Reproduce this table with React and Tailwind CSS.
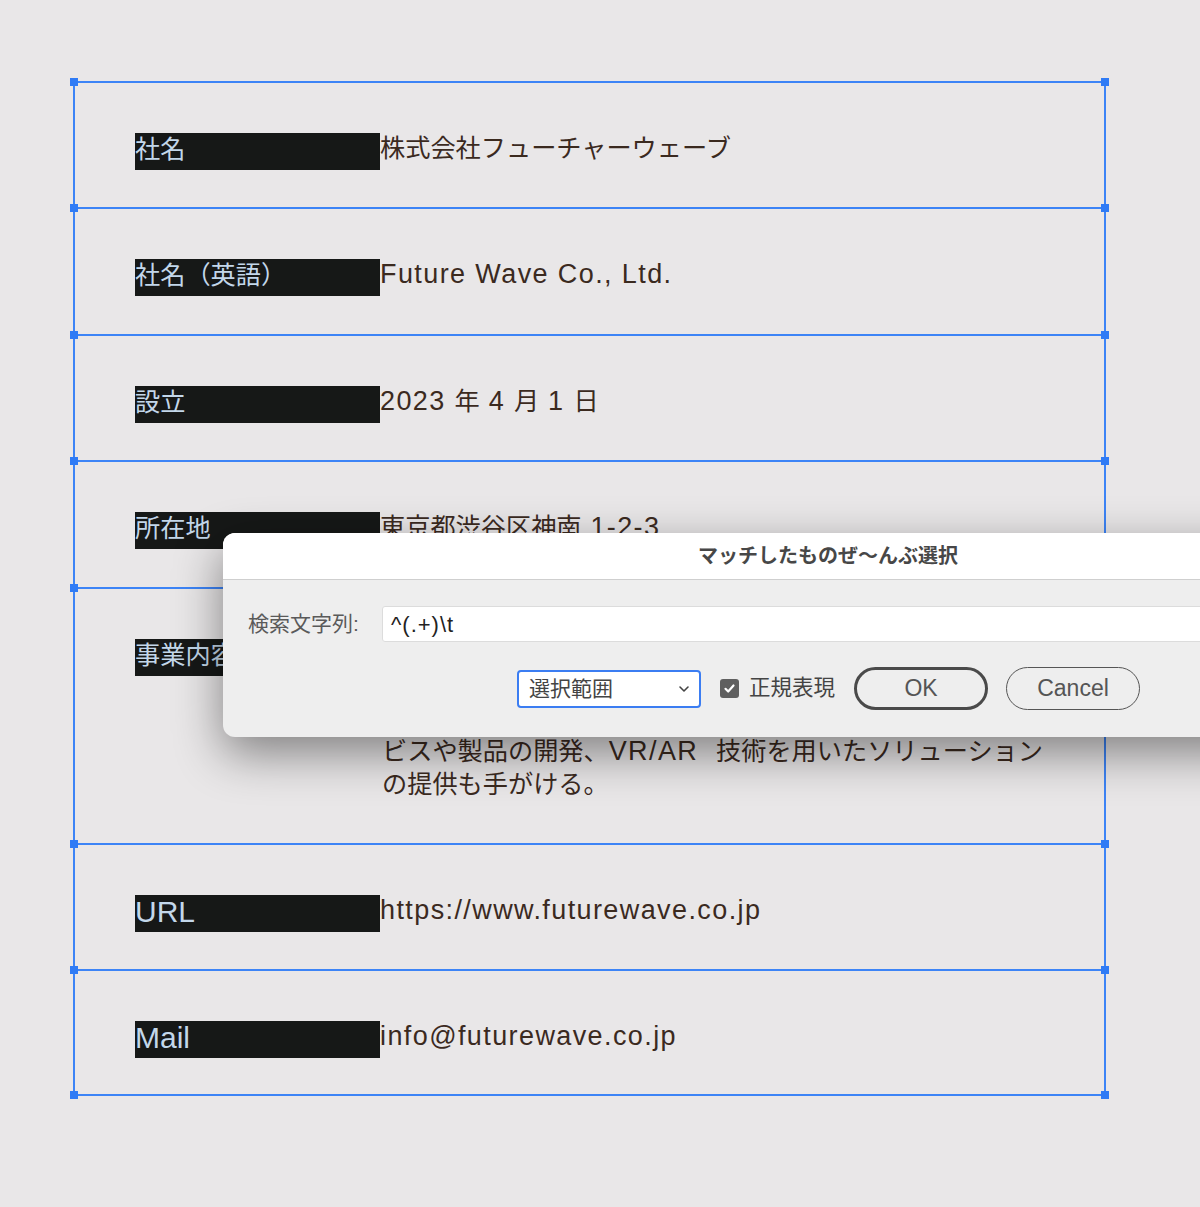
import React from 'react'

const FONT = { fontFamily: '"Liberation Sans", "Noto Sans CJK JP", sans-serif' }

// ASCII runs get their own (wider) setting, CJK keeps the base size
function Mixed({ text, latin }) {
  const parts = text.split(/([\x20-\x7e]+)/).filter(Boolean)
  return parts.map((p, i) =>
    /^[\x20-\x7e]+$/.test(p) ? <span key={i} className={latin}>{p}</span> : <span key={i}>{p}</span>
  )
}

const ROWS = [
  { label: '社名', value: '株式会社フューチャーウェーブ', h: 'h-[126px]' },
  { label: '社名（英語）', value: 'Future Wave Co., Ltd.', h: 'h-[127px]' },
  { label: '設立', value: '2023 年 4 月 1 日', h: 'h-[126px]' },
  { label: '所在地', value: '東京都渋谷区神南 1-2-3', h: 'h-[127px]' },
  {
    label: '事業内容',
    value: [
      'Web サイトやスマートフォンアプリの企画・制作を',
      '中心に、デジタルマーケティング支援、クラウド',
      'サービスの構築・運用、オリジナルの Web サー',
      'ビスや製品の開発、VR/AR  技術を用いたソリューション',
      'の提供も手がける。',
    ],
    h: 'h-[256px]',
  },
  { label: 'URL', value: 'https://www.futurewave.co.jp', h: 'h-[126px]' },
  { label: 'Mail', value: 'info@futurewave.co.jp', h: 'h-[127px]', last: true },
]

const VALUE_LATIN = 'text-[27px] tracking-[1.4px]'
const LABEL_LATIN = 'text-[30px]'

function Handle({ side, bottom }) {
  return (
    <span
      className={`absolute w-[8px] h-[8px] bg-[#2f7bf5] ${side === 'l' ? '-left-[5px]' : '-right-[5px]'} ${bottom ? '-bottom-[5px]' : '-top-[5px]'}`}
    />
  )
}

function Row({ row }) {
  const multi = Array.isArray(row.value)
  return (
    <div className={`relative ${row.h} border-t-2 border-[#3d84f6] ${row.last ? 'border-b-2' : ''}`}>
      <Handle side="l" />
      <Handle side="r" />
      {row.last && <Handle side="l" bottom />}
      {row.last && <Handle side="r" bottom />}
      <div className="flex items-start pl-[60px] pt-[49px]">
        <div className="mt-[1px] w-[245px] h-[37px] bg-[#161817] text-[#c3d7ea] text-[25.2px] leading-[33px] whitespace-nowrap overflow-hidden">
          <Mixed text={row.label} latin={LABEL_LATIN} />
        </div>
        <div className={`text-[#3b2a1f] text-[25.2px] leading-[33px] whitespace-pre ${multi ? '-mt-[2px]' : ''}`}>
          {multi
            ? row.value.map((l, i) => (
                <div key={i} className="pl-[2px]"><Mixed text={l} latin={VALUE_LATIN} /></div>
              ))
            : <Mixed text={row.value} latin={VALUE_LATIN} />}
        </div>
      </div>
    </div>
  )
}

function Dialog() {
  return (
    <div className="absolute left-[223px] top-[533px] w-[1210px] h-[204px] rounded-[12px] bg-[#eeeeee] overflow-hidden shadow-[0_16px_48px_rgba(0,0,0,0.45)]">
      <div className="h-[47px] bg-white border-b border-[#cfcfcf] flex items-center justify-center">
        <span className="text-[20px] font-bold text-[#474747]">マッチしたものぜ〜んぶ選択</span>
      </div>
      <div className="pl-[25px] pt-[26px]">
        <div className="flex items-center">
          <span className="w-[134px] text-[21px] text-[#5a5a5a]">検索文字列:</span>
          <div className="flex-1 h-[36px] bg-white border border-[#dcdcdc] rounded-[3px] flex items-center pl-[8px] text-[22px] tracking-[1px] text-[#222]">
            ^(.+)\t
          </div>
        </div>
        <div className="flex items-center mt-[25px] ml-[269px]">
          <div className="w-[184px] h-[38px] bg-white border-2 border-[#3b7df2] rounded-[4px] flex items-center justify-between pl-[10px] pr-[8px]">
            <span className="text-[21px] text-[#444]">選択範囲</span>
            <svg width="14" height="14" viewBox="0 0 14 14" fill="none" stroke="#444" strokeWidth="1.6" strokeLinecap="round" strokeLinejoin="round">
              <path d="M3 5l4 4 4-4" />
            </svg>
          </div>
          <div className="ml-[19px] w-[19px] h-[19px] rounded-[3px] bg-[#5f5f5f] flex items-center justify-center">
            <svg width="13" height="13" viewBox="0 0 13 13" fill="none" stroke="#fff" strokeWidth="2.2" strokeLinecap="round" strokeLinejoin="round">
              <path d="M2.5 6.8l2.7 2.7 5.3-6" />
            </svg>
          </div>
          <span className="ml-[10px] text-[21.5px] text-[#444]">正規表現</span>
          <button className="ml-[19px] w-[134px] h-[43px] rounded-full border-[3px] border-[#4a4a4a] text-[23px] text-[#555] flex items-center justify-center">
            OK
          </button>
          <button className="ml-[18px] w-[134px] h-[43px] rounded-full border-[1.5px] border-[#555] text-[23px] text-[#555] flex items-center justify-center">
            Cancel
          </button>
        </div>
      </div>
    </div>
  )
}

export default function App() {
  return (
    <div className="relative w-[1200px] h-[1207px] bg-[#e9e7e8] overflow-hidden" style={FONT}>
      <div className="pt-[81px] pl-[73px]">
        <div className="w-[1033px] border-x-2 border-[#3d84f6]">
          {ROWS.map((r, i) => <Row key={i} row={r} />)}
        </div>
      </div>
      <Dialog />
    </div>
  )
}
